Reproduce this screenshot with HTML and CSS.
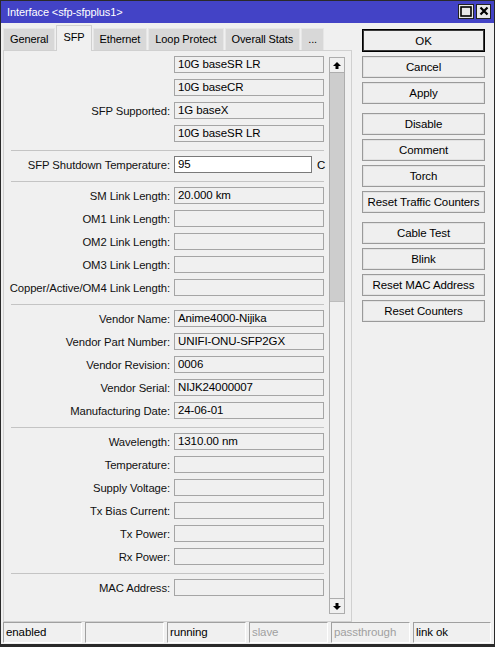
FILE: index.html
```html
<!DOCTYPE html>
<html>
<head>
    <meta charset="UTF-8">
    <title>Interface &lt;sfp-sfpplus1&gt;</title>
    <link rel="stylesheet" href="styles.css">
</head>
<body>
    <div class="window">
        <div class="titlebar">
            <span class="title">Interface &lt;sfp-sfpplus1&gt;</span>
            <div class="title-buttons">
                <span class="title-btn">
                    <svg width="12" height="11" viewBox="0 0 12 11"><rect x="1" y="1" width="10" height="9" fill="none" stroke="#000" stroke-width="1.6"/></svg>
                </span>
                <span class="title-btn">
                    <svg width="10" height="10" viewBox="0 0 10 10"><path d="M1.5 1.5 L8.5 8.5 M8.5 1.5 L1.5 8.5" stroke="#000" stroke-width="2.2"/></svg>
                </span>
            </div>
        </div>

        <div class="main">
            <div class="left">
                <div class="tabs">
                    <div class="tab">General</div>
                    <div class="tab active">SFP</div>
                    <div class="tab">Ethernet</div>
                    <div class="tab">Loop Protect</div>
                    <div class="tab">Overall Stats</div>
                    <div class="tab">...</div>
                </div>

                <div class="panel">
                    <div class="form">
                        <div class="row"><span></span><div class="field">10G baseSR LR</div></div>
                        <div class="row"><span></span><div class="field">10G baseCR</div></div>
                        <div class="row"><label>SFP Supported:</label><div class="field">1G baseX</div></div>
                        <div class="row"><span></span><div class="field">10G baseSR LR</div></div>
                        <div class="sep"></div>

                        <div class="row with-unit"><label>SFP Shutdown Temperature:</label><div class="field edit">95</div><span class="unit">C</span></div>
                        <div class="sep"></div>

                        <div class="row"><label>SM Link Length:</label><div class="field">20.000 km</div></div>
                        <div class="row"><label>OM1 Link Length:</label><div class="field"></div></div>
                        <div class="row"><label>OM2 Link Length:</label><div class="field"></div></div>
                        <div class="row"><label>OM3 Link Length:</label><div class="field"></div></div>
                        <div class="row"><label>Copper/Active/OM4 Link Length:</label><div class="field"></div></div>
                        <div class="sep"></div>

                        <div class="row"><label>Vendor Name:</label><div class="field">Anime4000-Nijika</div></div>
                        <div class="row"><label>Vendor Part Number:</label><div class="field">UNIFI-ONU-SFP2GX</div></div>
                        <div class="row"><label>Vendor Revision:</label><div class="field">0006</div></div>
                        <div class="row"><label>Vendor Serial:</label><div class="field">NIJK24000007</div></div>
                        <div class="row"><label>Manufacturing Date:</label><div class="field">24-06-01</div></div>
                        <div class="sep"></div>

                        <div class="row"><label>Wavelength:</label><div class="field">1310.00 nm</div></div>
                        <div class="row"><label>Temperature:</label><div class="field"></div></div>
                        <div class="row"><label>Supply Voltage:</label><div class="field"></div></div>
                        <div class="row"><label>Tx Bias Current:</label><div class="field"></div></div>
                        <div class="row"><label>Tx Power:</label><div class="field"></div></div>
                        <div class="row"><label>Rx Power:</label><div class="field"></div></div>
                        <div class="sep"></div>

                        <div class="row"><label>MAC Address:</label><div class="field"></div></div>
                    </div>

                    <div class="scrollbar">
                        <div class="arrow">
                            <svg width="8" height="7" viewBox="0 0 8 7"><polygon points="4,0 8,4 5.5,4 5.5,7 2.5,7 2.5,4 0,4" fill="#000"/></svg>
                        </div>
                        <div class="thumb"></div>
                        <div class="track"></div>
                        <div class="arrow down">
                            <svg width="8" height="7" viewBox="0 0 8 7"><polygon points="4,7 8,3 5.5,3 5.5,0 2.5,0 2.5,3 0,3" fill="#000"/></svg>
                        </div>
                    </div>
                </div>
            </div>

            <div class="actions">
                <div class="group">
                    <button class="btn default">OK</button>
                    <button class="btn">Cancel</button>
                    <button class="btn">Apply</button>
                </div>
                <div class="group">
                    <button class="btn">Disable</button>
                    <button class="btn">Comment</button>
                    <button class="btn">Torch</button>
                    <button class="btn">Reset Traffic Counters</button>
                </div>
                <div class="group">
                    <button class="btn">Cable Test</button>
                    <button class="btn">Blink</button>
                    <button class="btn">Reset MAC Address</button>
                    <button class="btn">Reset Counters</button>
                </div>
            </div>
        </div>

        <div class="statusbar">
            <div class="cell">enabled</div>
            <div class="cell"></div>
            <div class="cell">running</div>
            <div class="cell off">slave</div>
            <div class="cell off">passthrough</div>
            <div class="cell">link ok</div>
        </div>
    </div>
</body>
</html>
```

FILE: styles.css
```css
* {
    margin: 0;
    padding: 0;
    box-sizing: border-box;
}

body {
    font-family: 'Liberation Sans', Arial, sans-serif;
    font-size: 11px;
    letter-spacing: -0.1px;
    color: #000;
    background: #f0f0f0;
}

.window {
    width: 495px;
    height: 647px;
    border: 1px solid #2a2a2a;
    border-bottom-width: 3px;
    background: #f0f0f0;
    display: flex;
    flex-direction: column;
}

/* title bar */
.titlebar {
    height: 22px;
    background: #4343c6;
    color: #fff;
    display: flex;
    align-items: center;
    justify-content: space-between;
    padding: 0 3px 0 6px;
}

.title {
    font-size: 11px;
}

.title-buttons {
    display: flex;
    gap: 2px;
    margin-top: -2px;
}

.title-btn {
    width: 16px;
    height: 15px;
    background: #e8e8e8;
    border: 1px solid #222;
    display: flex;
    align-items: center;
    justify-content: center;
}

.title-btn + .title-btn {
    width: 15px;
}

/* main area */
.main {
    display: flex;
    height: 599px;
    padding: 2px 0 0 2px;
}

.left {
    width: 349px;
    display: flex;
    flex-direction: column;
}

.tabs {
    display: flex;
    align-items: flex-end;
    gap: 1px;
    height: 25px;
}

.tab {
    height: 22px;
    line-height: 21px;
    padding: 0 6px;
    font-size: 11px;
    background: #d8d8d8;
    border: 1px solid #e6e6e6;
    border-bottom: none;
}

.tab.active {
    height: 26px;
    line-height: 22px;
    background: #f0f0f0;
    border-color: #d0d0d0;
    margin-bottom: -1px;
    position: relative;
    z-index: 1;
}

.panel {
    height: 572px;
    border: 1px solid #d0d0d0;
    display: flex;
    padding: 0 6px 0 0;
}

/* form */
.form {
    width: 325px;
    padding: 5px 0 0 7px;
    overflow: hidden;
}

.row {
    display: grid;
    grid-template-columns: 159px 150px;
    column-gap: 4px;
    align-items: center;
    height: 17px;
    margin-bottom: 6px;
}

.row.with-unit {
    grid-template-columns: 159px 138px auto;
}

.row label {
    justify-self: end;
    white-space: nowrap;
    font-size: 11.3px;
    color: #111;
}

.field {
    height: 17px;
    line-height: 15px;
    border: 1px solid #a5a5a5;
    background: #f0f0f0;
    padding: 0 3px;
    font-size: 11.5px;
    white-space: nowrap;
    overflow: hidden;
}

.field.edit {
    background: #fff;
    border-color: #7a7a7a;
}

.unit {
    padding-left: 1px;
    font-size: 11.5px;
}

/* row margin collapses into this one */
.sep {
    width: 313px;
    height: 1px;
    background: #c4c4c4;
    margin: 8px 0 5px;
}

/* scrollbar */
.scrollbar {
    width: 16px;
    margin: 6px 0 7px 1px;
    border: 1px solid #adadad;
    display: flex;
    flex-direction: column;
}

.arrow {
    height: 15px;
    background: #f0f0f0;
    border-bottom: 1px solid #adadad;
    display: flex;
    align-items: center;
    justify-content: center;
}

.arrow.down {
    border-bottom: none;
    border-top: 1px solid #adadad;
}

.thumb {
    height: 229px;
    background: #cdcdcd;
    border-bottom: 1px solid #bcbcbc;
}

.track {
    flex: 1;
    background: #f0f0f0;
}

/* buttons */
.actions {
    width: 123px;
    margin-left: 10px;
    padding-top: 4px;
    display: flex;
    flex-direction: column;
    gap: 9px;
}

.group {
    display: flex;
    flex-direction: column;
    gap: 4px;
}

.btn {
    height: 22px;
    font-family: inherit;
    font-size: 11.5px;
    letter-spacing: -0.1px;
    color: #000;
    background: #efefef;
    border: 1px solid #9a9a9a;
    box-shadow: inset 0 0 0 1px #e2e2e2;
}

.btn.default {
    height: 23px;
    border-color: #000;
    box-shadow: inset 0 0 0 1px #3a3a3a;
}

/* status bar */
.statusbar {
    height: 22px;
    display: flex;
    gap: 3px;
    padding: 0 3px 1px 2px;
}

.cell {
    width: 79px;
    height: 21px;
    line-height: 19px;
    padding-left: 2px;
    font-size: 11.5px;
    border: 1px solid #fff;
    border-top-color: #a0a0a0;
    border-left-color: #a0a0a0;
    white-space: nowrap;
}

.cell:last-child {
    flex: 1;
}

.cell.off {
    color: #a0a0a0;
}
```
